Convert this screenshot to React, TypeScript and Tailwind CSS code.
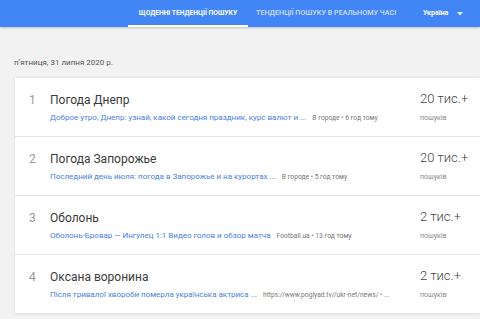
import React from "react";

const rows = [
  {
    n: 1,
    title: "Погода Днепр",
    article: "Доброе утро, Днепр: узнай, какой сегодня праздник, курс валют и ...",
    meta: "В городе • 6 год тому",
    count: "20 тис.+",
  },
  {
    n: 2,
    title: "Погода Запорожье",
    article: "Последний день июля: погода в Запорожье и на курортах ...",
    meta: "В городе • 5 год тому",
    count: "20 тис.+",
  },
  {
    n: 3,
    title: "Оболонь",
    article: "Оболонь-Бровар — Ингулец 1:1 Видео голов и обзор матча",
    meta: "Football.ua • 13 год тому",
    count: "2 тис.+",
  },
  {
    n: 4,
    title: "Оксана воронина",
    article: "Після тривалої хвороби померла українська актриса ...",
    meta: "https://www.poglyad.tv//ukr-net/news/ • ...",
    count: "2 тис.+",
  },
];

export default function App() {
  return (
    <div
      className="w-[480px] h-[319px] overflow-hidden bg-[#f2f2f2]"
      style={{ fontFamily: "Roboto, 'Noto Sans', sans-serif" }}
    >
      <div className="h-[27px] bg-[#4285f4] flex items-stretch whitespace-nowrap shadow-[0_1px_2px_rgba(0,0,0,0.2)]">
        <div className="w-[128px]" />
        <div className="w-[120px] flex items-center justify-center border-b-[2px] border-white text-white font-bold text-[6.7px] pt-[2px]">
          ЩОДЕННІ ТЕНДЕНЦІЇ ПОШУКУ
        </div>
        <div className="w-[155px] flex items-center pl-[8px] text-[#cfdffc] font-medium text-[7.2px]">
          ТЕНДЕНЦІЇ ПОШУКУ В РЕАЛЬНОМУ ЧАСІ
        </div>
        <div className="flex items-center pl-[20px] text-white font-bold text-[7px]">
          Україна
          <svg width="6" height="4" viewBox="0 0 6 4" className="ml-[9px]">
            <path d="M0 0 L6 0 L3 3.5 Z" fill="#e3ecfd" />
          </svg>
        </div>
      </div>
      <div className="pl-[14px] pt-[30px] h-[51px] text-[8px] text-[#555]">
        пʼятниця, 31 липня 2020 р.
      </div>
      <div className="ml-[15px] bg-white shadow-[0_0_2px_rgba(0,0,0,0.12)]">
        {rows.map((r) => (
          <div
            key={r.n}
            className="h-[59px] flex border-b border-[#e4e4e4] pt-[15px]"
          >
            <div className="w-[35px] pl-[14px] text-[12px] leading-[15px] text-[#999]">
              {r.n}
            </div>
            <div className="flex-1 min-w-0">
              <div className="text-[12px] leading-[15px] text-[#3a3a3a]">{r.title}</div>
              <div className="flex items-center mt-[4px] h-[12px] whitespace-nowrap">
                <span className="text-[8px] text-[#4a80e0]">{r.article}</span>
                <span className="ml-[6px] text-[6.7px] text-[#777]">{r.meta}</span>
              </div>
            </div>
            <div className="w-[60px] shrink-0">
              <div className="text-[13px] leading-[16px] font-light text-[#444] -mt-[2px]">{r.count}</div>
              <div className="text-[7px] text-[#888] mt-[6px]">пошуків</div>
            </div>
          </div>
        ))}
      </div>
    </div>
  );
}
